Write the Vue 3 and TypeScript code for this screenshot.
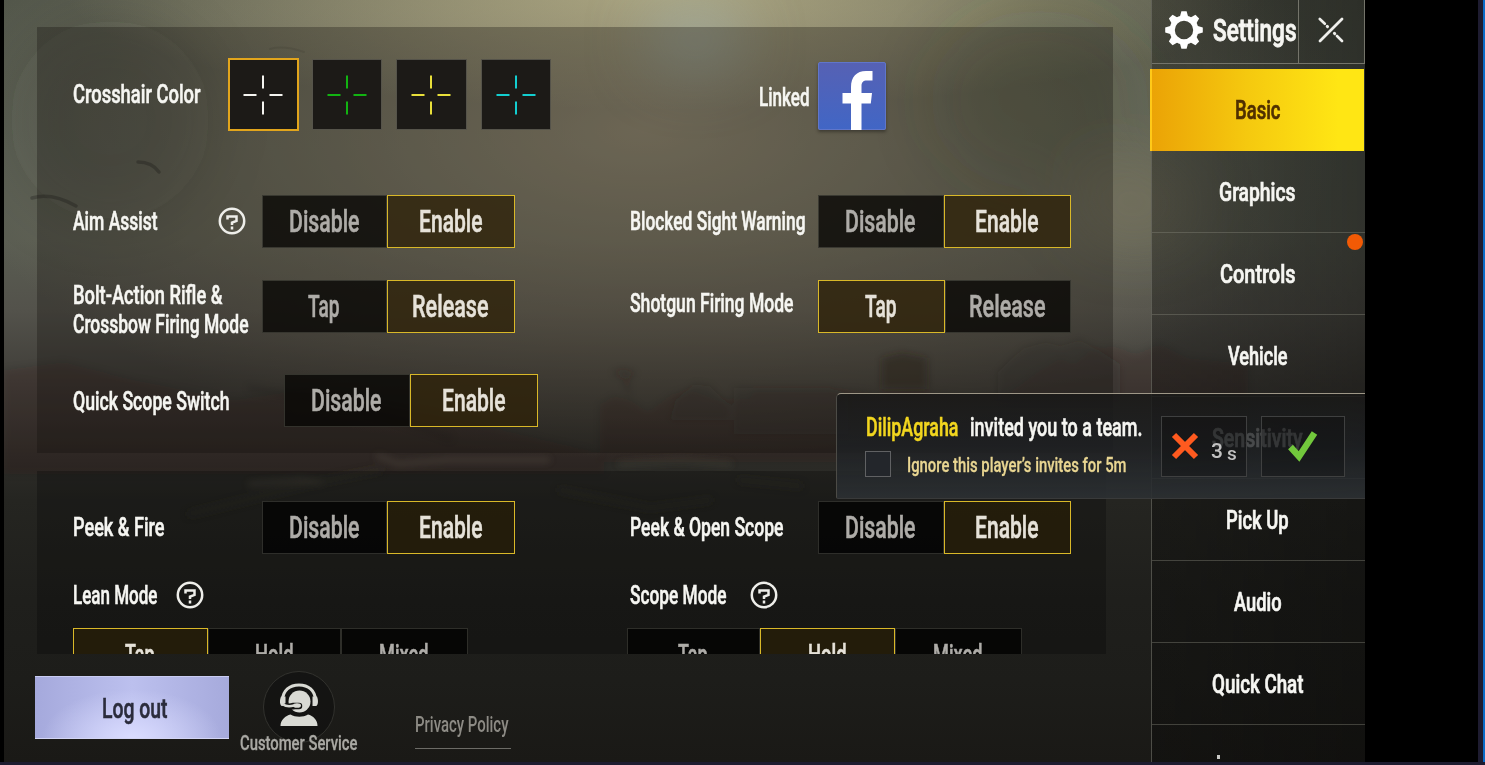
<script setup lang="ts">
import { h, type FunctionalComponent } from 'vue'

interface TxtProps { t: string; w: number; s?: number; b?: number }

// Condensed lettering: the glyphs are fitted to a given width, the box is one cap height tall.
const Txt: FunctionalComponent<TxtProps> = (p) => {
  const size = p.s ?? 25.5
  const cap = Math.round(size * 0.711)
  return h('svg', { class: 'txt', width: p.w, height: cap }, [
    h('text', {
      x: 0, y: cap, textLength: p.w + 0.5, lengthAdjust: 'spacingAndGlyphs',
      'font-size': size, 'font-weight': 500, fill: 'currentColor',
      stroke: 'currentColor', 'stroke-width': p.b ?? 0.55,
    }, p.t),
  ])
}
Txt.props = ['t', 'w', 's', 'b']

interface Opt { t: string; w: number }
interface Cell { label: Opt[]; help?: boolean; on: number; opts: Opt[]; mod?: string }

const disable: Opt = { t: 'Disable', w: 70 }
const enable: Opt = { t: 'Enable', w: 63 }
const tap: Opt = { t: 'Tap', w: 31 }
const release: Opt = { t: 'Release', w: 76 }

const rows: Cell[][] = [
  [
    { label: [{ t: 'Aim Assist', w: 84 }], help: true, on: 1, opts: [disable, enable] },
    { label: [{ t: 'Blocked Sight Warning', w: 175 }], on: 1, opts: [disable, enable] },
  ],
  [
    { label: [{ t: 'Bolt-Action Rifle &', w: 149 }, { t: 'Crossbow Firing Mode', w: 175 }], on: 1, opts: [tap, release], mod: 'low' },
    { label: [{ t: 'Shotgun Firing Mode', w: 163 }], on: 0, opts: [tap, release], mod: 'high' },
  ],
  [{ label: [{ t: 'Quick Scope Switch', w: 156 }], on: 1, opts: [disable, enable], mod: 'wide' }],
]
const peekRow: Cell[] = [
  { label: [{ t: 'Peek & Fire', w: 91 }], on: 1, opts: [disable, enable] },
  { label: [{ t: 'Peek & Open Scope', w: 153 }], on: 1, opts: [disable, enable] },
]
const modes: { label: Opt; on: number; side: string }[] = [
  { label: { t: 'Lean Mode', w: 84 }, on: 0, side: 'left' },
  { label: { t: 'Scope Mode', w: 96 }, on: 1, side: 'right' },
]
const modeOpts: Opt[] = [{ t: 'Tap', w: 29 }, { t: 'Hold', w: 38 }, { t: 'Mixed', w: 49 }]
const crosshairs = ['#f4f4f0', '#12b312', '#e8df3a', '#13ced0']
const tabs: Opt[] = [
  { t: 'Basic', w: 45 }, { t: 'Graphics', w: 76 }, { t: 'Controls', w: 75 }, { t: 'Vehicle', w: 59 },
  { t: 'Sensitivity', w: 90 }, { t: 'Pick Up', w: 62 }, { t: 'Audio', w: 47 }, { t: 'Quick Chat', w: 91 },
]
const teeth = [0, 45, 90, 135, 180, 225, 270, 315]
</script>

<template>
  <div class="screen">
    <div class="game">
      <svg class="scene" width="1361" height="762" viewBox="4 0 1361 762">
        <defs>
          <filter id="soft" x="-20%" y="-20%" width="140%" height="140%"><feGaussianBlur stdDeviation="3.500" /></filter>
          <filter id="haze" x="-50%" y="-50%" width="200%" height="200%"><feGaussianBlur stdDeviation="30" /></filter>
        </defs>
        <g filter="url(#haze)">
          <ellipse cx="695" cy="40" rx="50" ry="34" fill="#a4b8ba" opacity=".5" />
          <ellipse cx="1135" cy="205" rx="60" ry="40" fill="#8a7d64" opacity=".35" />
          <ellipse cx="1040" cy="100" rx="110" ry="90" fill="#3d4230" opacity=".18" />
          <ellipse cx="110" cy="120" rx="100" ry="100" fill="#34372f" opacity=".14" />
        </g>
        <g filter="url(#soft)" fill="#2a211d">
          <path opacity=".12" d="M600 462V404l14-8 16 4 18 12 24-18 20-4 26 10 32-2 4-8h100l26 4 30-4 60 6 40-4 30-22 20-12 14 6 16-14 24-4 22 8 24-10 28 14 60 6V462z" />
          <path opacity=".17" d="M670 420l6-20 18-16 16 2 20 20v14zM734 388h96l18 6v40H734zM998 372l14-14 12-10 22-6 14 4 20-6 18 10 22 14v36H998z" />
          <path opacity=".42" d="M882 358l20-5 25 5v31h-45z" />
          <path opacity=".25" d="M612 372l12-3 12 4-8 6 2 22-6-22z" />
          <path opacity=".12" d="M4 370l60-8 70 18 100 20 80-12 120 26 170 40v20H4z" />
        </g>
        <g filter="url(#soft)" fill="none" stroke-linecap="round">
          <path d="M378 456l20 8 50-4 100 0M250 484l50-4 20 2" stroke="#8a806c" stroke-width="4" opacity=".25" />
          <path d="M620 464l60-4 50 4" stroke="#777060" stroke-width="4" opacity=".22" />
          <path d="M380 470l-70 14-120 30M560 490l90 18 60-8M740 480l60 6" stroke="#3a3a30" stroke-width="6" opacity=".3" />
          <path d="M250 388l110 20 90 30" stroke="#1a1a18" stroke-width="5" opacity=".14" />
        </g>
        <g fill="none" stroke="#23241f" stroke-linecap="round" opacity=".36">
          <path d="M138 162c8 0 16 3 21 10" stroke-width="3.500" />
          <path d="M32 198c14-4 28-1 44 8" stroke-width="3.500" />
          <path d="M270 49c10-3 22-1 34 3" stroke-width="2" opacity=".3" />
        </g>
      </svg>

      <main class="main">
        <section class="panel first">
          <div class="row cross-row">
            <div class="cell">
              <div class="label cross-label"><Txt t="Crosshair Color" :w="127" /></div>
              <div class="swatches">
                <div v-for="(c, i) in crosshairs" :key="c" class="swatch" :class="{ on: i === 0 }">
                  <svg width="40" height="40" viewBox="-20 -20 40 40">
                    <path d="M0-19.5V-6.5M0 6.5V19.5M-19.5 0H-6.5M6.5 0H19.5" :stroke="c" stroke-width="2" />
                  </svg>
                </div>
              </div>
            </div>
            <div class="cell linked">
              <Txt t="Linked" :w="50" />
              <svg class="fb" width="68" height="68" viewBox="0 0 68 68">
                <defs>
                  <linearGradient id="fbg" x1="0" y1="0" x2="0" y2="1">
                    <stop offset="0" stop-color="#5661b4" /><stop offset="1" stop-color="#4166c5" />
                  </linearGradient>
                </defs>
                <rect x=".5" y=".5" width="67" height="67" rx="1.500" fill="url(#fbg)" stroke="#6076ca" />
                <path d="M33 68V41.500h-8.500V31H33v-6c0-10 5.500-16 15-16h6.500v9.500H49c-4 0-5.500 2-5.500 5.500v7H54l-1.200 10.500h-9.300V68z" fill="#fff" />
              </svg>
            </div>
          </div>
          <div v-for="(r, i) in rows" :key="i" class="row" :class="'r' + i">
            <div v-for="c in r" :key="c.label[0].t" class="cell" :class="c.mod">
              <div class="label">
                <div class="lines"><Txt v-for="l in c.label" :key="l.t" :t="l.t" :w="l.w" /></div>
                <svg v-if="c.help" class="help" width="28" height="28" viewBox="0 0 28 28">
                  <circle cx="14" cy="14" r="12.200" /><path d="M9.500 12.500V9.500h9v4.400l-4.500 1.800v2.300M14 19.600v2.900" />
                </svg>
              </div>
              <div class="seg">
                <div v-for="(o, k) in c.opts" :key="o.t" class="opt" :class="{ on: k === c.on }"><Txt :t="o.t" :w="o.w" :s="31" /></div>
              </div>
            </div>
          </div>
        </section>

        <section class="panel second">
          <div class="row">
            <div v-for="c in peekRow" :key="c.label[0].t" class="cell">
              <div class="label"><Txt :t="c.label[0].t" :w="c.label[0].w" /></div>
              <div class="seg">
                <div v-for="(o, k) in c.opts" :key="o.t" class="opt" :class="{ on: k === c.on }"><Txt :t="o.t" :w="o.w" :s="31" /></div>
              </div>
            </div>
          </div>
          <div class="row modes">
            <div v-for="m in modes" :key="m.side" class="mode" :class="m.side">
              <div class="mode-label">
                <Txt :t="m.label.t" :w="m.label.w" />
                <svg class="help" width="28" height="28" viewBox="0 0 28 28">
                  <circle cx="14" cy="14" r="12.200" /><path d="M9.500 12.500V9.500h9v4.400l-4.500 1.800v2.300M14 19.600v2.900" />
                </svg>
              </div>
              <div class="seg triple">
                <div v-for="(o, k) in modeOpts" :key="o.t" class="opt" :class="{ on: k === m.on }"><Txt :t="o.t" :w="o.w" :s="27" /></div>
              </div>
            </div>
          </div>
        </section>

        <footer class="foot">
          <div class="logout"><Txt t="Log out" :w="65" :s="28" /></div>
          <div class="service">
            <div class="ring">
              <svg width="42" height="44" viewBox="0 0 42 44">
                <path d="M4.500 18C5 8.500 11.500 3 21 3s16 5.500 16.500 15" fill="none" stroke="#d9dad4" stroke-width="3" />
                <path d="M3 14.500h4.500v9.500H4c-2-.5-2.800-5-1-9.500zM39 14.500h-4.500v9.500H38c2-.5 2.800-5 1-9.500z" fill="#d9dad4" />
                <circle cx="21.500" cy="19.500" r="11" fill="#d9dad4" />
                <path d="M8 24.500c3 .6 5 .2 8.500-.5M15 24h6" fill="none" stroke="#141412" stroke-width="6.500" stroke-linecap="round" />
                <path d="M5 22.500c3 2 7 2 11 1" fill="none" stroke="#d9dad4" stroke-width="2.500" />
                <ellipse cx="19" cy="23.500" rx="4" ry="2.300" fill="#d9dad4" />
                <path d="M2.500 44c0-6 5-10.500 10-11.500 5 3 12.500 3 17.500 0 5 1 9.500 5.500 9.500 11.500z" fill="#d9dad4" />
              </svg>
            </div>
            <Txt t="Customer Service" :w="117" :s="20" :b="0.3" />
          </div>
          <div class="privacy"><Txt t="Privacy Policy" :w="93" :s="22" :b="0" /></div>
        </footer>
      </main>

      <aside class="side">
        <header class="head">
          <div class="title">
            <svg width="38" height="38" viewBox="-19 -19 38 38">
              <circle r="11.800" fill="none" stroke="#fff" stroke-width="5.200" />
              <path v-for="a in teeth" :key="a" d="M-4.200-13L-2.600-18.800H2.600L4.200-13z" fill="#fff" :transform="`rotate(${a})`" />
            </svg>
            <Txt t="Settings" :w="83" :s="30.5" :b="0.9" />
          </div>
          <div class="close">
            <svg width="26" height="26" viewBox="0 0 26 26" fill="none" stroke="#efefec" stroke-linecap="round">
              <path d="M2 24L24 2" stroke-width="2.800" />
              <path d="M1.800 2l5 4.800M19 19l5 5" stroke-width="2.600" />
              <path d="M9.200 9.300l.3.300M16.400 16.300l.3.300" stroke-width="3" />
            </svg>
          </div>
        </header>
        <nav class="tabs">
          <div v-for="(t, i) in tabs" :key="t.t" class="tab" :class="{ on: i === 0 }">
            <Txt :t="t.t" :w="t.w" :s="26" :b="0.7" />
            <i v-if="t.t === 'Controls'" class="dot"></i>
          </div>
          <div class="tab last"><i class="tip"></i></div>
        </nav>
      </aside>

      <div class="toast">
        <div class="msg">
          <div class="line"><Txt class="name" t="DilipAgraha" :w="92" /><Txt t="invited you to a team." :w="172" /></div>
          <div class="line ignore"><i class="check"></i><Txt t="Ignore this player’s invites for 5m" :w="219" :s="20.5" :b="0.3" /></div>
        </div>
        <div class="act no">
          <svg width="28" height="28" viewBox="0 0 28 28"><path d="M3 3l22 22M25 3L3 25" stroke="#ff5a1f" stroke-width="6" /></svg>
          <span class="three">3</span><span class="sec">s</span>
        </div>
        <div class="act yes">
          <svg width="30" height="32" viewBox="0 0 30 32"><path d="M2.500 17l8.500 9.500L26.500 3" fill="none" stroke="#72c83c" stroke-width="6.500" /></svg>
        </div>
      </div>
    </div>
    <div class="bezel"></div>
  </div>
</template>

<style>
body { margin: 0; background: #000; overflow: hidden; }
.txt { display: block; flex: none; overflow: visible; }
</style>

<style scoped>
.screen {
  box-sizing: border-box; width: 1485px; height: 765px; display: flex; background: #000;
  padding-left: 4px; border-bottom: 3px solid #1e1c30; overflow: hidden;
  font-family: Roboto, "Liberation Sans", sans-serif; color: #f6f6f2;
}
.game {
  position: relative; display: flex; width: 1361px; height: 762px; overflow: hidden; flex: none;
  background:
    radial-gradient(ellipse 600px 120px at 660px -10px, rgba(205, 198, 150, .6), transparent),
    radial-gradient(ellipse 700px 330px at 640px 130px, rgba(186, 170, 138, .62), rgba(170, 156, 126, .3) 55%, transparent),
    linear-gradient(180deg, #53574b 0, #585d52 150px, #5a5d52 240px, #53524b 310px, #403e39 380px, #2e2d29 455px, #252521 500px, #1f1f1c 600px, #1d1d1a 680px, #1a1916 762px);
}
.scene { position: absolute; inset: 0; }
.bezel { margin-left: auto; width: 5px; background: #1e1c30; border-right: 2px solid #0a6cc8; }
.main { position: relative; width: 1147px; flex: none; }
.panel { box-sizing: border-box; margin-left: 33px; padding-left: 36px; background: rgba(15, 13, 10, .3); overflow: hidden; }
.first { width: 1076px; height: 426px; margin-top: 27px; padding-top: 31px; }
.second { width: 1069px; height: 183px; margin-top: 18px; padding-top: 30px; background: rgba(8, 8, 7, .3); }
.row { display: grid; grid-template-columns: 557px 1fr; }
.cell { display: flex; align-items: center; }
.label { box-sizing: border-box; width: 189px; display: flex; align-items: center; justify-content: space-between; padding-right: 16px; padding-bottom: 2px; }
.lines { display: grid; gap: 11px; }
.low .label { padding: 5px 0 0; }
.high .label { padding-bottom: 8px; }
.wide .label { width: 211px; padding-bottom: 0; }
.cell .cross-label { width: 154.500px; padding: 0 0 2px; }
.cell + .cell .label { width: 188px; padding-right: 0; }
.r0 { margin-top: 64px; }
.r1 { margin-top: 32px; }
.r2 { margin-top: 41px; }
.swatches { display: flex; gap: 14px; align-items: center; height: 73px; }
.swatch { box-sizing: border-box; width: 70.500px; height: 71px; display: flex; align-items: center; justify-content: center; background: #1c1a17; border: 1px solid #55534a; }
.swatch.on { width: 71px; height: 73px; border: 2px solid #e2a51c; }
.swatch + .swatch { position: relative; left: -1px; }
.linked { box-sizing: border-box; padding: 5px 0 0 129px; gap: 9px; }
.fb { box-shadow: 0 2px 3px rgba(0, 0, 0, .35); margin-top: -3px; }
.help { fill: none; stroke: #eeeeea; stroke-width: 2.500; flex: none; }
.seg { display: flex; height: 53px; }
.opt { box-sizing: border-box; width: 125px; padding: 0 2px 1px 0; display: flex; align-items: center; justify-content: center; background: rgba(8, 7, 5, .8); border: 1px solid rgba(130, 130, 118, .32); color: #aeaca8; }
.opt.on { width: 128px; background: rgba(46, 35, 10, .8); border: 1px solid #d9b828; color: #e6e2d9; }
.cell + .cell .opt, .wide .opt { width: 126px; }
.cell + .cell .opt.on { width: 127px; }
.wide .opt.on { width: 128px; }
.second .opt:not(.on) { background: rgba(3, 3, 3, .8); }
.second .opt.on { background: rgba(38, 29, 9, .85); }
.triple { width: 395px; }
.triple .opt { width: 133px; padding: 0 2px 0 0; }
.triple .opt.on { width: 135px; }
.triple .opt:last-child { width: 127px; }
.modes { margin-top: 26px; }
.mode { display: grid; gap: 19px; }
.mode-label { display: flex; align-items: center; gap: 18.500px; height: 29px; }
.right .mode-label { gap: 23.500px; }
.right .triple { margin-left: -3px; }
.foot { display: flex; align-items: flex-start; padding: 22px 0 0 31px; }
.logout {
  width: 194px; height: 63px; display: flex; align-items: center; justify-content: center; color: #2b2c3c; padding: 0 0 0 4px; box-sizing: border-box;
  background: radial-gradient(ellipse 90px 50px at 50% 100%, #dadcff, rgba(218, 220, 255, 0)), linear-gradient(90deg, #a5a9dc, #bcc0ee 50%, #a6aadc);
  box-shadow: inset 0 1px #c9ccf2, inset 0 -1px #d3d5f5;
}
.service { width: 117px; margin: -5px 0 0 11px; display: flex; flex-direction: column; align-items: center; color: #aaa9a4; }
.ring { box-sizing: border-box; width: 72px; height: 72px; margin-bottom: -7px; border: 1px solid #32322e; border-radius: 50%; background: rgba(12, 12, 12, .5); display: flex; align-items: center; justify-content: center; }
.ring svg { margin-top: -7px; }
.privacy { width: 96px; height: 32px; margin: 40px 0 0 58px; border-bottom: 1px solid #6c6b66; color: #8d8b85; }
.side { position: relative; box-sizing: border-box; width: 214px; flex: none; border-left: 1px solid rgba(150, 150, 140, .45); background: linear-gradient(90deg, rgba(8, 8, 7, .34), rgba(8, 8, 7, .5)); }
.head { box-sizing: border-box; display: flex; height: 64px; border-bottom: 1px solid #74746a; }
.title { box-sizing: border-box; width: 146px; padding: 0 0 3px 13px; display: flex; gap: 10px; align-items: center; }
.close { box-sizing: border-box; flex: 1; display: flex; align-items: center; justify-content: center; border-left: 1px solid #74746a; border-right: 1px solid #74746a; padding: 0 2px 4px 0; }
.tabs { padding-top: 5px; }
.tab { position: relative; box-sizing: border-box; height: 82px; display: flex; align-items: center; justify-content: center; padding-right: 3px; border-bottom: 1px solid rgba(130, 130, 120, .42); }
.tab.on { margin: 0 1px 0 -2px; padding: 0 2px 0 0; background: linear-gradient(90deg, #eba306, #f5c90f 45%, #ffe614 88%); border: 0; border-left: 2px solid #ffc918; color: #503000; }
.tab.last { border: 0; height: 48px; align-items: flex-start; justify-content: flex-start; }
.tip { width: 3px; height: 4px; margin: 30px 0 0 65px; background: #c9c9c6; }
.dot { position: absolute; right: 2px; top: 1px; width: 16px; height: 16px; border-radius: 50%; background: #f25a05; }
.toast {
  position: absolute; left: 832px; top: 393px; width: 529px; height: 106px; box-sizing: border-box; display: flex;
  border-top: 1.500px solid #9e9787; border-left: 1px solid #4c4b46; border-bottom: 1px solid #393a3a; border-radius: 5px 0 0 2px;
  background: linear-gradient(180deg, rgba(24, 24, 23, .84), rgba(29, 32, 35, .8) 50%, rgba(44, 48, 51, .92));
}
.msg { width: 324px; padding: 24px 0 0 29px; box-sizing: border-box; flex: none; }
.line { display: flex; align-items: center; gap: 12px; }
.name { color: #f2d61f; }
.ignore { margin: 15px 0 0 -1px; gap: 16px; color: #e9d692; }
.check { box-sizing: border-box; width: 26px; height: 26px; background: #23262b; border: 1px solid #606163; }
.act { box-sizing: border-box; height: 61px; margin-top: 22px; display: flex; border: 1px solid #3f4040; background: rgba(10, 10, 10, .3); }
.no { width: 86px; padding: 15px 0 0 9px; }
.yes { width: 84px; margin-left: 14px; padding: 13px 0 0 26px; }
.no svg { flex: none; }
.three, .sec { font: 500 21px/20px Roboto, sans-serif; color: #c2c2c2; }
.three { margin: 9px 0 0 12px; }
.sec { margin: 12px 0 0 4px; font-size: 19px; }
</style>
